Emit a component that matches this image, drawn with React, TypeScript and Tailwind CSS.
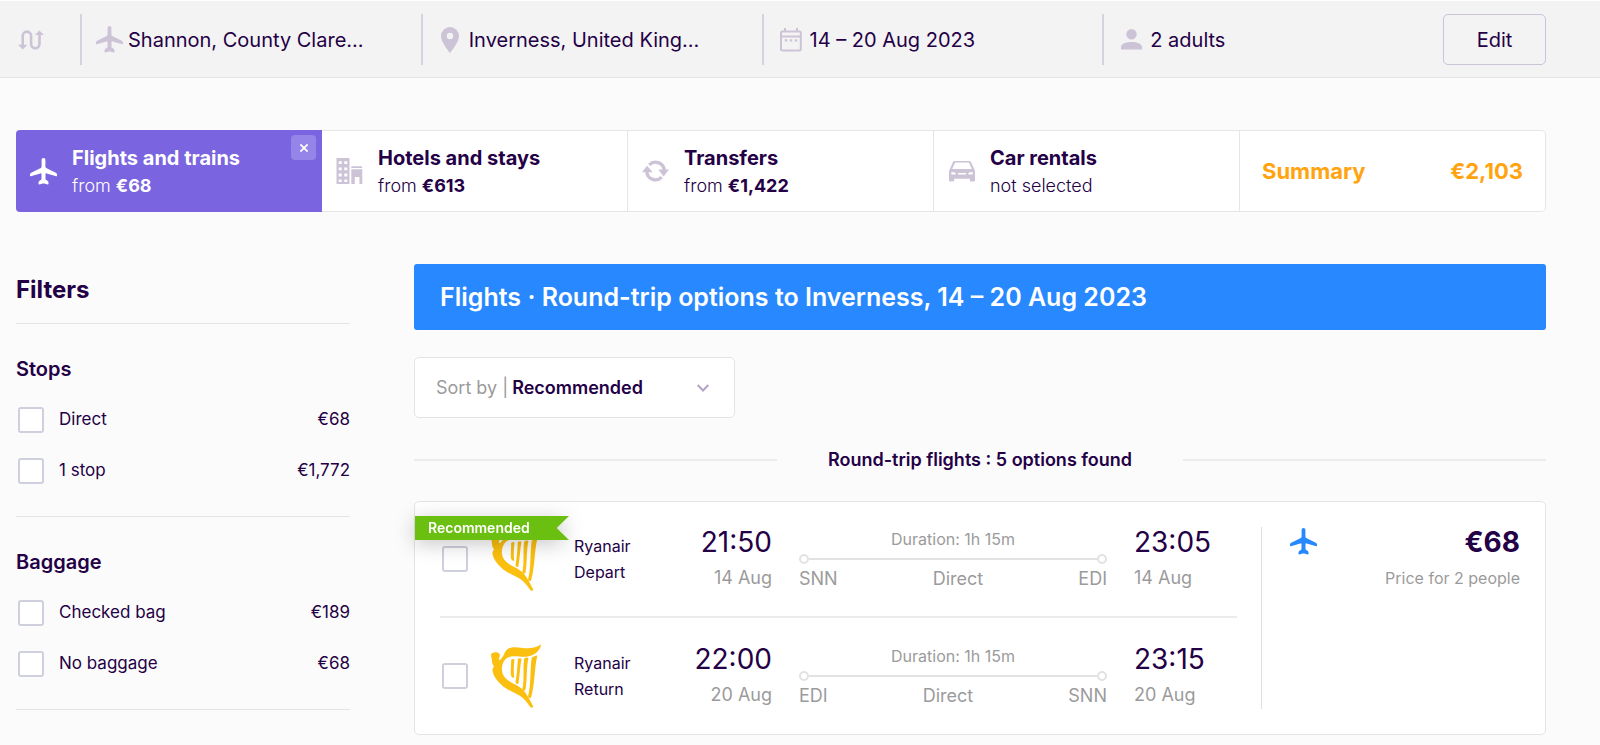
import type { ReactNode } from 'react';

function PlaneIcon() {
  return (
    <svg viewBox="0 0 27 27" className="size-[27px]" fill="currentColor" aria-hidden="true">
      <path d="M13.500 0c1.200 0 1.900.8 1.900 2v6.600c0 .6.2 1 .8 1.300l9.600 4.900c.8.4 1.200.9 1.200 1.700v1.200c0 .5-.3.7-.8.6l-9.600-2.900c-.7-.2-1.100 0-1.100.7v4.600c0 .5.1.8.5 1.100l1.800 1.300c.5.4.7.8.7 1.400v1.300c0 .5-.3.7-.8.6l-3.500-.8a3 3 0 0 0-1.400 0l-3.500.8c-.5.1-.8-.1-.8-.6v-1.300c0-.6.2-1 .7-1.400l1.800-1.300c.4-.3.5-.6.5-1.100v-4.600c0-.7-.4-.9-1.100-.7L.8 18.300c-.5.1-.8-.1-.8-.6v-1.200c0-.8.4-1.300 1.200-1.700l9.600-4.900c.6-.3.8-.7.8-1.300V2c0-1.200.7-2 1.900-2z" />
    </svg>
  );
}

function RouteIcon() {
  return (
    <svg viewBox="0 0 26 20" className="h-5 w-[26px]" aria-hidden="true">
      <path d="M4.700 16V5.800A4.200 4.200 0 0 1 13.100 5.800V14a4.200 4.200 0 0 0 8.400 0V4" fill="none" stroke="currentColor" strokeWidth="2.600" />
      <path d="M0 14.800h9.400L4.700 19.600zM16.800 5h9.200L21.400.4z" fill="currentColor" />
    </svg>
  );
}

function PinIcon() {
  return (
    <svg viewBox="0 0 18 26" className="h-[26px] w-[18px]" fill="currentColor" fillRule="evenodd" aria-hidden="true">
      <path d="M9 0a9 9 0 0 1 9 9c0 6.500-9 17-9 17S0 15.500 0 9a9 9 0 0 1 9-9zm0 5.800a3.200 3.200 0 1 0 0 6.400 3.200 3.200 0 0 0 0-6.400z" />
    </svg>
  );
}

function CalendarIcon() {
  return (
    <svg viewBox="0 0 22 24" className="h-6 w-[22px]" aria-hidden="true">
      <rect x="1" y="3.500" width="19.800" height="19" rx="1.500" fill="none" stroke="currentColor" strokeWidth="2" />
      <path d="M1 8.600h20M5 0v4M17 0v4" stroke="currentColor" strokeWidth="2" />
      <path d="M4.800 11.200h2.400v2.200H4.800zM9.800 11.200h2.400v2.200H9.800zM14.800 11.200h2.400v2.200h-2.400z" fill="currentColor" />
    </svg>
  );
}

function PersonIcon() {
  return (
    <svg viewBox="0 0 21 21" className="size-[21px]" fill="currentColor" aria-hidden="true">
      <circle cx="10.500" cy="5.200" r="5.200" />
      <path d="M0 20.500v-2.300c0-3.500 5-5.200 10.500-5.200S21 14.700 21 18.200v2.300z" />
    </svg>
  );
}

function HotelIcon() {
  return (
    <svg viewBox="0 0 27 26" className="h-[26px] w-[27px]" fill="currentColor" fillRule="evenodd" aria-hidden="true">
      <path d="M.5 0h13v26H.5zM2.700 3.200v2.900h3V3.200zM8.300 3.200v2.900h3V3.200zM2.700 9.400v2.900h3V9.400zM8.300 9.400v2.900h3V9.400zM2.700 15.600v2.900h3v-2.900zM8.300 15.600v2.900h3v-2.900zM2.700 21.600v2.400h3v-2.400zM8.300 21.600v2.400h3v-2.400z" />
      <path d="M15.300 8.200h10.800v1.700H15.300zM15.300 11.200h11V26h-2.900v-7h-4.600v7h-3.500z" />
    </svg>
  );
}

function TransferIcon() {
  return (
    <svg viewBox="0 0 27 22" className="h-[22px] w-[27px]" aria-hidden="true">
      <path d="M4.800 11a8.700 8.700 0 0 0 14.900 6.200M7.300 4.800A8.700 8.700 0 0 1 22.200 11" fill="none" stroke="currentColor" strokeWidth="3.300" />
      <path d="M0 12.300 5 5.800l5.800 6.500zM16.200 9.600H27l-5.400 6.800z" fill="currentColor" />
    </svg>
  );
}

function CarIcon() {
  return (
    <svg viewBox="0 0 26 21" className="h-[21px] w-[26px]" fill="currentColor" fillRule="evenodd" aria-hidden="true">
      <path d="M5.800 0h14.400c.9 0 1.500.4 1.900 1.200l3.300 7.300c.4.800.6 1.500.6 2.300v8.200c0 1-.6 1.600-1.500 1.600h-2.200c-.9 0-1.500-.6-1.500-1.600v-1.200H5.200V19c0 1-.6 1.600-1.500 1.600H1.500C.6 20.600 0 20 0 19v-8.200c0-.8.200-1.500.6-2.300l3.300-7.300C4.300.4 4.900 0 5.800 0zm.3 1.500L3.200 7.900h19.600l-2.900-6.400zM2.200 11.300v1c0 .8.500 1.300 1.300 1.300h3.100v-.9c0-.8-.5-1.400-1.300-1.400zm21.600 0h-3.100c-.8 0-1.300.6-1.300 1.400v.9h3.100c.8 0 1.300-.5 1.300-1.300zM8.900 12v1.500h8.200V12z" />
    </svg>
  );
}

function HarpLogo() {
  return (
    <svg viewBox="0 0 151 192" className="h-16 w-[50px]" fill="#fbbf0f" role="img" aria-label="Ryanair logo">
      <path d="M151 0c-1 12-8 23-21 30-13 7-28 9-44 7-20-2-34-1-43 9-8 9-11 21-10 33 1 14 8 23 20 31 17 11 34 16 46 30 12 15 22 36 29 49-4 4-7 3-10 0-9-14-19-26-32-34-17-11-38-17-54-32C18 110 8 98 5 83c-2-9 2-13 4-16-4-5-6-10-6-16 0-5-1-7-2-12C-1 31 1 27 7 26c6-2 13-2 17 1 4 4 3 9 1 14-1 3-1 7 1 8 7-6 11-12 14-20C45 17 53 10 67 9c16-1 31 4 46 3C131 11 143 7 151 0z" />
      <path d="M61 47c3-3 8-3 10 0-2 14-3 34-1 55-5 0-9-4-10-9-1-15 1-30 1-46zM81 45c3-3 8-4 11-1-4 23-5 46-9 75-4 2-8 0-9-4 4-22 6-48 7-70zM100 44c4-4 10-5 13-2-7 34-3 63-9 96-3 3-9 1-9-3 6-30 1-58 5-91zM123 41c4-4 11-6 17-7-10 43-7 83-19 127-4 4-9 0-9-4 10-38 5-77 11-116z" />
    </svg>
  );
}

function SearchCell({ icon, children }: { icon: ReactNode; children: ReactNode }) {
  return (
    <div className="flex min-w-0 flex-1 items-center gap-[5px] border-l-2 border-[#d8d1de] pl-[14px]">
      <span className="flex w-[27px] shrink-0 justify-center text-[#cdc3d6]">{icon}</span>
      <span className="truncate text-xl">{children}</span>
    </div>
  );
}

function SearchBar() {
  return (
    <header className="border-t border-b border-t-white border-b-[#e4e4e4] bg-[#f3f3f3] pt-[13px] pr-[54px] pb-3 pl-4">
      <div className="flex h-[51px]">
        <button type="button" aria-label="Multi-city" className="flex w-16 items-center pl-[2px] text-[#cdc3d6]">
          <RouteIcon />
        </button>
        <SearchCell icon={<PlaneIcon />}>Shannon, County Clare...</SearchCell>
        <SearchCell icon={<PinIcon />}>Inverness, United King...</SearchCell>
        <SearchCell icon={<CalendarIcon />}>14 – 20 Aug 2023</SearchCell>
        <SearchCell icon={<PersonIcon />}>2 adults</SearchCell>
        <button type="button" className="w-[103px] rounded-[5px] border border-[#cdc3d6] text-xl">
          Edit
        </button>
      </div>
    </header>
  );
}

function TripTab({ icon, title, children, active = false }: { icon: ReactNode; title: string; children: ReactNode; active?: boolean }) {
  return (
    <button
      type="button"
      className={
        active
          ? 'flex w-full items-center gap-[15px] rounded-l-[4px] bg-[#7a64e0] pl-[14px] text-left text-white'
          : 'flex items-center gap-[15px] border-y border-r border-[#e6e6e6] bg-white pl-[14px] text-left'
      }
    >
      <span className={active ? 'flex w-[27px] justify-center' : 'flex w-[27px] justify-center text-[#cdc3d6]'}>{icon}</span>
      <span className="flex flex-col pt-[2px]">
        <span className="text-xl leading-[27px] font-bold">{title}</span>
        <span className="text-lg leading-[27px] font-light">{children}</span>
      </span>
    </button>
  );
}

function TripTabs() {
  return (
    <nav className="grid h-[82px] grid-cols-5" aria-label="Trip parts">
      <div className="relative flex">
        <TripTab active icon={<PlaneIcon />} title="Flights and trains">
          from <b className="font-bold">€68</b>
        </TripTab>
        <button type="button" aria-label="Remove flights" className="absolute top-[5px] right-[6px] flex size-[25px] items-center justify-center rounded-[4px] bg-[#9585e8] text-white">
          <svg viewBox="0 0 8 8" className="size-2" stroke="currentColor" strokeWidth="1.700" aria-hidden="true">
            <path d="M.4.4l7.200 7.200M7.600.4L.4 7.600" />
          </svg>
        </button>
      </div>
      <TripTab icon={<HotelIcon />} title="Hotels and stays">
        from <b className="font-bold">€613</b>
      </TripTab>
      <TripTab icon={<TransferIcon />} title="Transfers">
        from <b className="font-bold">€1,422</b>
      </TripTab>
      <TripTab icon={<CarIcon />} title="Car rentals">
        not selected
      </TripTab>
      <button type="button" className="flex items-center justify-between rounded-r-[5px] border-y border-r border-[#e6e6e6] bg-white px-[22px] text-[22px] font-bold text-[#ffa30f]">
        <span>Summary</span>
        <span>€2,103</span>
      </button>
    </nav>
  );
}

const checkbox = 'size-[26px] shrink-0 appearance-none rounded-[3px] border-2 border-[#cfd0dd] bg-white checked:bg-[#7a64e0]';

function FilterGroup({ title, items }: { title: string; items: [string, string][] }) {
  return (
    <section role="group" aria-label={title} className="border-b border-[#e4e4e4] pt-8 pb-5">
      <h3 className="mb-3 text-xl leading-[26px] font-semibold">{title}</h3>
      {items.map(([name, price]) => (
        <label key={name} className="flex h-[51px] items-center pl-[2px] text-[17px]">
          <input type="checkbox" className={checkbox} />
          <span className="ml-[15px] flex-1">{name}</span>
          <span>{price}</span>
        </label>
      ))}
    </section>
  );
}

type Leg = { dir: string; dep: string; arr: string; date: string; from: string; to: string };

function FlightLeg({ leg }: { leg: Leg }) {
  return (
    <div className="flex h-[116px] items-center pl-[2px]">
      <input type="checkbox" aria-label={leg.dir} className={checkbox} />
      <div className="ml-[23px] shrink-0">
        <HarpLogo />
      </div>
      <div className="ml-[33px] w-[98px] text-base leading-[26px]">
        <p>Ryanair</p>
        <p>{leg.dir}</p>
      </div>
      <div className="w-[100px] pt-[2px] text-right">
        <p className="text-[28px] leading-9">{leg.dep}</p>
        <p className="text-lg leading-9 text-[#9b9b9b]">{leg.date}</p>
      </div>
      <div className="mx-[27px] flex flex-1 flex-col gap-[3px] text-[#9b9b9b]">
        <p className="text-center text-base leading-6">Duration: 1h 15m</p>
        <div className="flex items-center">
          <span className="size-[10px] rounded-full border-2 border-[#e2e2e2]" />
          <span className="h-[2px] flex-1 bg-[#e2e2e2]" />
          <span className="size-[10px] rounded-full border-2 border-[#e2e2e2]" />
        </div>
        <p className="flex justify-between text-lg leading-6">
          <span>{leg.from}</span>
          <span>Direct</span>
          <span>{leg.to}</span>
        </p>
      </div>
      <div className="w-[103px] pt-[2px]">
        <p className="text-[28px] leading-9">{leg.arr}</p>
        <p className="text-lg leading-9 text-[#9b9b9b]">{leg.date}</p>
      </div>
    </div>
  );
}

function FlightCard() {
  return (
    <article className="relative flex rounded-[5px] border border-[#e4e4e4] bg-white">
      <div className="ml-[25px] flex-1 divide-y-2 divide-[#ececec]">
        <FlightLeg leg={{ dir: 'Depart', dep: '21:50', arr: '23:05', date: '14 Aug', from: 'SNN', to: 'EDI' }} />
        <FlightLeg leg={{ dir: 'Return', dep: '22:00', arr: '23:15', date: '20 Aug', from: 'EDI', to: 'SNN' }} />
      </div>
      <div className="my-[25px] ml-6 flex w-[284px] items-start justify-between border-l border-[#e0e0e0] pr-[25px] pl-7">
        <span className="pt-px text-[#2788ff]">
          <PlaneIcon />
        </span>
        <div className="text-right">
          <p className="text-[28px] leading-[30px] font-bold">€68</p>
          <p className="mt-[3px] text-base leading-9 text-[#9b9b9b]">Price for 2 people</p>
        </div>
      </div>
      <div className="absolute top-[14px] left-0 drop-shadow-[0_4px_10px_rgba(0,0,0,0.22)]">
        <div className="flex h-6 w-[154px] items-center bg-[#6bbf10] pl-[13px] text-sm font-semibold text-white [clip-path:polygon(0_0,100%_0,92%_50%,100%_100%,0_100%)]">
          Recommended
        </div>
      </div>
    </article>
  );
}

export default function App() {
  return (
    <div className="min-h-screen bg-[#fbfbfb] font-['Inter',sans-serif] text-[#240046]">
      <SearchBar />
      <div className="pt-[52px] pr-[54px] pb-[10px] pl-4">
        <TripTabs />
        <div className="mt-[52px] flex gap-16">
          <aside className="w-[334px] shrink-0">
            <h2 className="border-b border-[#e4e4e4] pt-2 pb-[15px] text-2xl leading-9 font-bold">Filters</h2>
            <FilterGroup title="Stops" items={[['Direct', '€68'], ['1 stop', '€1,772']]} />
            <FilterGroup title="Baggage" items={[['Checked bag', '€189'], ['No baggage', '€68']]} />
          </aside>
          <main className="min-w-0 flex-1">
            <h1 className="rounded-[3px] bg-[#2788ff] px-[26px] py-[15px] text-[25px] leading-9 font-semibold text-white">
              Flights · Round-trip options to Inverness, 14 – 20 Aug 2023
            </h1>
            <div className="relative mt-[27px] flex h-[61px] w-[321px] items-center rounded-[5px] border border-[#e4e4e4] bg-white pl-[21px] text-lg">
              <label htmlFor="sort" className="text-[#9b9b9b]">
                Sort by |
              </label>
              <select id="sort" className="h-full flex-1 appearance-none bg-transparent pl-1 font-semibold">
                <option>Recommended</option>
              </select>
              <svg viewBox="0 0 12 8" className="pointer-events-none absolute right-[25px] h-2 w-3 text-[#b5a3c6]" fill="none" stroke="currentColor" strokeWidth="2" aria-hidden="true">
                <path d="M.7 1l5.300 5.500L11.300 1" />
              </svg>
            </div>
            <div className="my-7 flex h-[27px] items-center gap-[51px]">
              <span className="h-[2px] flex-1 bg-[#ececec]" />
              <p className="text-lg font-semibold">Round-trip flights : 5 options found</p>
              <span className="h-[2px] flex-1 bg-[#ececec]" />
            </div>
            <FlightCard />
          </main>
        </div>
      </div>
    </div>
  );
}
